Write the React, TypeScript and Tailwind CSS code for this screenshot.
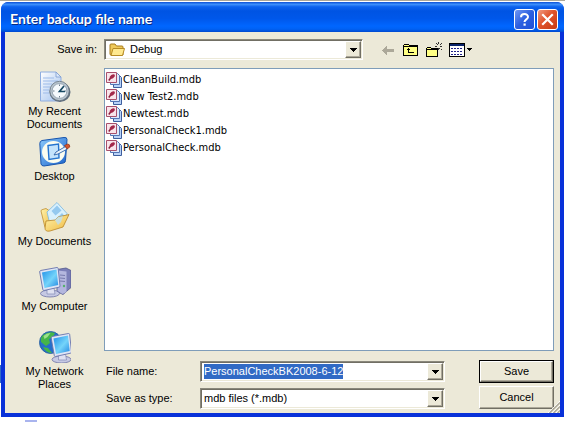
import { useEffect, useRef, useState } from "react";
import type { ReactNode } from "react";

const files = ["CleanBuild.mdb", "New Test2.mdb", "Newtest.mdb", "PersonalCheck1.mdb", "PersonalCheck.mdb"];

function RecentIcon() {
  return (
    <svg className="size-8" viewBox="0 0 32 32">
      <defs>
        <linearGradient id="paper" x1="0" y1="0" x2="1" y2="1">
          <stop offset="0" stopColor="#ffffff" />
          <stop offset="1" stopColor="#9fc0ee" />
        </linearGradient>
      </defs>
      <path d="M1.500 1H17l5 5v24H1.500z" fill="url(#paper)" stroke="#8faee0" />
      <path d="M17 1l5 5h-5z" fill="#dbe8fb" stroke="#7d9ccf" strokeWidth=".8" />
      <path d="M4 7h11M4 10h15M4 13h9M4 16h7M4 19h6M4 22h6" stroke="#9dbbe9" />
      <ellipse cx="21" cy="21" rx="10.500" ry="10" fill="#5d6c7c" />
      <circle cx="20.500" cy="20" r="9.700" fill="#b9c5cf" stroke="#66747f" strokeWidth=".8" />
      <circle cx="20.500" cy="20" r="7.400" fill="#f6fafd" stroke="#8595a3" strokeWidth=".8" />
      <path d="M20.500 13.500v1.500M20.500 25v1.500M14 20h1.500M25.500 20H27" stroke="#6b7c8c" />
      <path d="M25 15l-4.500 5.500H26" fill="none" stroke="#174a63" strokeWidth="1.700" />
    </svg>
  );
}

function DesktopIcon() {
  return (
    <svg className="size-8" viewBox="0 0 32 32">
      <defs>
        <linearGradient id="desk" x1="0" y1="0" x2="1" y2="1">
          <stop offset="0" stopColor="#8ccbfc" />
          <stop offset="1" stopColor="#1a62cb" />
        </linearGradient>
      </defs>
      <path d="M3 4.500L25 1.500q3-.5 3 2l-1.500 21q0 2-2 2.500L5 30q-2.500 0-3-2L.8 7.500Q.8 5 3 4.500z" fill="url(#desk)" stroke="#1855ad" />
      <ellipse cx="14.500" cy="16" rx="11.500" ry="11" fill="#fbfdf0" />
      <path d="M9 9.500l10.500-1.500.5 14L10 23.500z" fill="#c4e4fc" stroke="#2474cf" strokeWidth="1.400" />
      <path d="M15 19l2-3 9.500-5.500 2 2.500-9.500 5z" fill="#eaf3fb" stroke="#2a62a8" strokeWidth=".9" />
      <path d="M25.500 9.500l3-1.500q2.500 0 2.300 3L28 13z" fill="#d4572d" stroke="#913318" strokeWidth=".7" />
    </svg>
  );
}

function DocumentsIcon() {
  return (
    <svg className="size-8" viewBox="0 0 32 32">
      <defs>
        <linearGradient id="manila" x1="0" y1="0" x2="1" y2="1">
          <stop offset="0" stopColor="#fff3ac" />
          <stop offset="1" stopColor="#efb93f" />
        </linearGradient>
      </defs>
      <path d="M2 10q0-1 1-1.300l4-1.200 3 2 3 19q-4 1-7-2z" fill="url(#manila)" stroke="#be8e31" strokeWidth=".8" />
      <path d="M8 11l10-9.500 10 11-8 14-9-3z" fill="#d8f0fd" stroke="#78b6de" strokeWidth=".8" />
      <path d="M12.500 10l5.500-5.500 4.500 5-6 5zM17 18l6-6 2.500 3-5 6z" fill="#94c9ef" />
      <path d="M7 20l9-1 3-3 11-2.500-6 12.500-13 4q-5 1-5-3z" fill="url(#manila)" stroke="#b98527" strokeWidth=".8" />
      <path d="M16 19l3-3 5-1-2 6-3 3z" fill="#bce0f6" opacity=".8" />
    </svg>
  );
}

function Monitor() {
  return (
    <>
      <ellipse cx="11" cy="27.500" rx="9.500" ry="3.500" fill="#c6c9e4" stroke="#6d72a5" strokeWidth=".8" />
      <path d="M8 22h7l1 6H8z" fill="#dfe1f1" stroke="#8389b5" strokeWidth=".7" />
      <path d="M1.500 4.500L18 1.500q1 0 1.200 1L21 20q0 1-1 1.200L5 24.500q-1 0-1.200-1L.7 6q0-1.200.8-1.500z" fill="#dfe5f5" stroke="#6673ab" strokeWidth=".9" />
      <path d="M3 6.500l14.500-3 1.700 15.500L5.500 22z" fill="url(#screen)" />
    </>
  );
}

function ScreenGradient() {
  return (
    <defs>
      <linearGradient id="screen" x1="0" y1="0" x2="1" y2="1">
        <stop offset="0" stopColor="#1f8fe8" />
        <stop offset=".55" stopColor="#74d4fa" />
        <stop offset="1" stopColor="#2488e2" />
      </linearGradient>
    </defs>
  );
}

function ComputerIcon() {
  return (
    <svg className="size-8" viewBox="0 0 32 32">
      <ScreenGradient />
      <path d="M18 3.500L27 2l5 2.500v17l-8 7-6-3z" fill="#7b7fb8" stroke="#52578c" strokeWidth=".8" />
      <path d="M18.500 4.500l9 1V26l-4 2-5-3z" fill="#b4b7de" />
      <path d="M21 9l5 .5M21 12l5 .5M21 15l5 .5" stroke="#777bad" strokeWidth="1.200" />
      <circle cx="25" cy="20" r="1.200" fill="#54b16a" />
      <Monitor />
    </svg>
  );
}

function NetworkIcon() {
  return (
    <svg className="size-8" viewBox="0 0 32 32">
      <ScreenGradient />
      <circle cx="11.500" cy="11.500" r="11" fill="#256fc9" stroke="#215a9c" strokeWidth=".8" />
      <path d="M4 4q6-4 12-2l-2 4-4 2 1 4-4 3-5-4q-1-4 2-7zM4 16l5 1 4 5q-6 0-9-6z" fill="#45b649" />
      <path d="M4.500 5q3-3 7-3l-3 4-3 2z" fill="#9fe08a" />
      <g transform="translate(11.500 1)">
        <Monitor />
      </g>
    </svg>
  );
}

function FolderIcon() {
  return (
    <svg className="size-4" viewBox="0 0 16 16">
      <path d="M1 3q0-1 1-1h4l1.500 2h5.500q1 0 1 1v8H2q-1 0-1-1z" fill="#eec95a" stroke="#a97c1c" />
      <path d="M4 6.500h11.500L13.500 13.500H2z" fill="#ffe98f" stroke="#b78b25" />
    </svg>
  );
}

function MdbIcon() {
  return (
    <svg className="size-4 shrink-0" viewBox="0 0 16 16">
      <path d="M7.500 3.500h6l2 2v10h-8z" fill="#b9d2f7" stroke="#3e5f9e" />
      <path d="M4.500 1.500h7l2 2v9h-9z" fill="#dfeafd" stroke="#5375b4" />
      <path d="M.5.500h10v10H.5z" fill="#f9e4ea" stroke="#a8506c" />
      <path d="M2.800 8.500L5 5.500" stroke="#8a1b3c" strokeWidth="1.500" />
      <ellipse cx="6.300" cy="4.500" rx="3" ry="1.700" transform="rotate(-35 6.300 4.500)" fill="#a3284a" />
    </svg>
  );
}

function DropArrow() {
  return (
    <svg width="7" height="4" viewBox="0 0 7 4" shapeRendering="crispEdges">
      <path d="M0 0h7v1H0zM1 1h5v1H1zM2 2h3v1H2zM3 3h1v1H3z" fill="#000" />
    </svg>
  );
}

const sunken = "relative flex h-[21px] border border-t-[#8a887c] border-l-[#8a887c] border-r-white border-b-white bg-white shadow-[inset_1px_1px_0_#716f64,inset_-1px_-1px_0_#ece9d8]";
const dropFace = "absolute inset-y-px right-px flex w-4 items-center justify-center border border-t-white border-l-white border-r-[#716f64] border-b-[#716f64] bg-[#ece9d8] shadow-[inset_-1px_-1px_0_#aca899]";
const pushButton = "flex-1 w-full border border-t-white border-l-white border-r-[#716f64] border-b-[#716f64] bg-[#ece9d8] shadow-[inset_-1px_-1px_0_#aca899]";

const places: { label: string; icon: ReactNode }[] = [
  { label: "My Recent\nDocuments", icon: <RecentIcon /> },
  { label: "Desktop", icon: <DesktopIcon /> },
  { label: "My Documents", icon: <DocumentsIcon /> },
  { label: "My Computer", icon: <ComputerIcon /> },
  { label: "My Network\nPlaces", icon: <NetworkIcon /> },
];

function TitleBar() {
  return (
    <header className="flex h-[30px] shrink-0 items-center gap-0.5 rounded-t-[7px] bg-[linear-gradient(#0a4fd6_0%,#3c8ffb_8%,#0c62ee_16%,#0054e3_30%,#0057ea_55%,#0066ff_80%,#0062f5_90%,#0049cf_100%)] pt-1 pr-1.5 pl-[9px]">
      <h1 className="flex-1 truncate font-[Lato,'Noto_Sans',sans-serif] text-[14px] leading-4 font-bold text-white [text-shadow:1px_1px_0_#0a2a80]">
        Enter backup file name
      </h1>
      <button aria-label="Help" className="size-[21px] rounded-[3px] border border-white bg-[linear-gradient(135deg,#6f97f3,#2c5fe0_50%,#1e4fd8)]">
        <svg className="size-full" viewBox="0 0 19 19">
          <path d="M6 7.200C6 3 13 3 13 7c0 2.300-3.500 2.500-3.500 5" fill="none" stroke="#fff" strokeWidth="2" />
          <path d="M8.500 13.500h2.200v2.200H8.500z" fill="#fff" />
        </svg>
      </button>
      <button aria-label="Close" className="size-[21px] rounded-[3px] border border-white bg-[linear-gradient(135deg,#f09a80,#e0532b_45%,#c53a12)]">
        <svg className="size-full" viewBox="0 0 19 19">
          <path d="M5 5l9 9M14 5l-9 9" stroke="#fff" strokeWidth="2.200" strokeLinecap="square" />
        </svg>
      </button>
    </header>
  );
}

function Toolbar() {
  return (
    <div className="flex w-[197px] shrink-0 items-center gap-[7px] pl-[19px]">
      <button aria-label="Back" className="h-4 w-3.5">
        <svg width="14" height="16" viewBox="0 0 14 16" shapeRendering="crispEdges">
          <path d="M0 8l5-5v4h7v3H5v4z" fill="#aca899" />
        </svg>
      </button>
      <button aria-label="Up one level" className="size-4">
        <svg width="16" height="16" viewBox="0 0 16 16" shapeRendering="crispEdges">
          <path d="M.5 13.500v-10l1-1h4l1 1h8v10z" fill="#ffff84" stroke="#000" />
          <path d="M1 4.500h14" stroke="#000" />
          <path d="M5 6h1v1h1v1H6v2h5v1H5V8H4V7h1z" fill="#000" />
        </svg>
      </button>
      <button aria-label="Create new folder" className="size-4">
        <svg width="16" height="16" viewBox="0 0 16 16" shapeRendering="crispEdges">
          <path d="M.5 14.500v-8l1-1h3l1 1h6v8z" fill="#ffff84" stroke="#000" />
          <path d="M1 7.500h10" stroke="#000" />
          <path d="M12 0h1v2h-1zM12 6h1v2h-1zM14 4h2v1h-2zM9 4h2v1H9zM10 1h1v1h-1zM11 2h1v1h-1zM14 2h1v1h-1zM15 1h1v1h-1zM13 6h1v1h-1zM15 7h1v1h-1z" fill="#333" />
        </svg>
      </button>
      <button aria-label="Views" className="flex h-4 items-center gap-0.5">
        <svg width="16" height="14" viewBox="0 0 16 14" shapeRendering="crispEdges">
          <path d="M.5.500h15v13H.5z" fill="#fff" stroke="#000" />
          <path d="M1 1h14v2H1z" fill="#0a246a" />
          <path d="M2 5.500h12M2 8.500h12M2 11.500h12" stroke="#22228a" strokeDasharray="2 1" />
        </svg>
        <svg width="5" height="3" viewBox="0 0 5 3" shapeRendering="crispEdges">
          <path d="M0 0h5v1H0zM1 1h3v1H1zM2 2h1v1H2z" fill="#000" />
        </svg>
      </button>
    </div>
  );
}

export default function App() {
  const [name, setName] = useState("PersonalCheckBK2008-6-12");
  const nameRef = useRef<HTMLInputElement>(null);

  useEffect(() => {
    nameRef.current?.focus();
    nameRef.current?.select();
  }, []);

  return (
    <main className="relative flex min-h-screen flex-col border-t border-[#aca899] bg-white px-px pt-px pb-[5px] font-['Liberation_Sans',Arial,sans-serif] text-[11px] leading-[13px] text-black">
      {/* bits of the window behind the dialog */}
      <div className="absolute bottom-[39px] left-0 h-[18px] w-px bg-[#316ac5]" />
      <div className="absolute bottom-0 left-[25px] h-0.5 w-3 bg-[#a9b4ee]" />

      <div className="flex flex-1 flex-col rounded-t-lg bg-[#0831d9]">
        <TitleBar />
        <div className="mx-1 mb-1 flex flex-1 flex-col bg-[#ece9d8]">
          <div className="flex pt-[7px] pb-2">
            <label htmlFor="folder" className="w-[99px] shrink-0 pr-[7px] text-right leading-[21px]">
              Save in:
            </label>
            <div className={sunken + " flex-1"}>
              <div className="pointer-events-none absolute top-0.5 left-1">
                <FolderIcon />
              </div>
              <select id="folder" className="w-full appearance-none bg-transparent pl-[25px] outline-none">
                <option>Debug</option>
              </select>
              <span className={dropFace + " pointer-events-none"}>
                <DropArrow />
              </span>
            </div>
            <Toolbar />
          </div>

          <div className="relative flex flex-1 pr-1.5 pb-1">
            <nav className="flex w-[99px] shrink-0 flex-col pt-[3px]">
              {places.map((place) => (
                <button key={place.label} className="flex h-[65px] flex-col items-center gap-0.5">
                  {place.icon}
                  <span className="whitespace-pre">{place.label}</span>
                </button>
              ))}
            </nav>

            <div className="flex min-w-0 flex-1 flex-col">
              <ul className="flex-1 border border-[#7f9db9] bg-white px-px pt-0.5 font-['DejaVu_Sans_Condensed','DejaVu_Sans',sans-serif]">
                {files.map((file) => (
                  <li key={file} className="flex h-[17px] items-center gap-px">
                    <MdbIcon />
                    {file}
                  </li>
                ))}
              </ul>

              <div className="flex gap-[34px] pt-[9px]">
                <div className="grid flex-1 grid-cols-[96px_1fr] items-center gap-y-1.5 pt-px">
                  <label htmlFor="filename" className="pl-0.5">File name:</label>
                  <div className={sunken}>
                    <div className="flex items-center pl-[3px]">
                      <input
                        id="filename"
                        ref={nameRef}
                        value={name}
                        onChange={(e) => setName(e.target.value)}
                        className="h-[15px] w-52 bg-transparent leading-[15px] outline-none selection:bg-[#316ac5] selection:text-white"
                      />
                    </div>
                    <button aria-label="Recent names" className={dropFace}>
                      <DropArrow />
                    </button>
                  </div>
                  <label htmlFor="type" className="pl-0.5">Save as type:</label>
                  <div className={sunken}>
                    <select id="type" className="w-full appearance-none bg-transparent pl-[3px] outline-none">
                      <option>mdb files (*.mdb)</option>
                    </select>
                    <span className={dropFace + " pointer-events-none"}>
                      <DropArrow />
                    </span>
                  </div>
                </div>
                <div className="flex w-[75px] flex-col gap-[3px]">
                  <div className="flex flex-1 border border-black">
                    <button className={pushButton}>Save</button>
                  </div>
                  <button className={pushButton}>Cancel</button>
                </div>
              </div>
            </div>

            <svg className="absolute right-0 bottom-0" width="12" height="12" viewBox="0 0 12 12">
              <path d="M0 12L12 0M4 12l8-8M8 12l4-4" stroke="#fff" />
              <path d="M1.500 12L12 1.500M5.500 12L12 5.500M9.500 12L12 9.500" stroke="#aca899" strokeWidth="1.500" />
            </svg>
          </div>
        </div>
      </div>
    </main>
  );
}
